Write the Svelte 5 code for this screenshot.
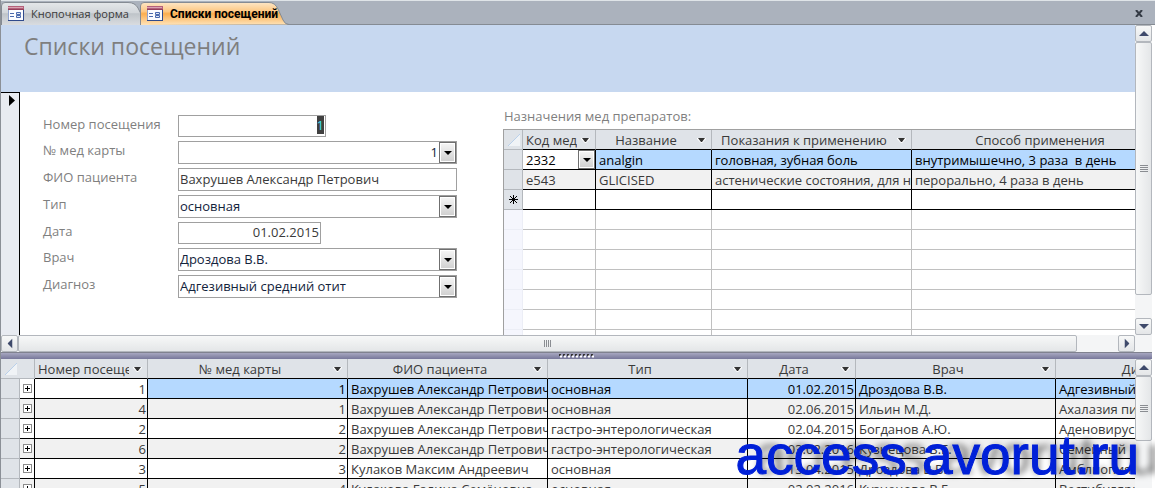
<script>
  const fields = [
    { id: 'visit', label: 'Номер посещения', kind: 'number', value: '1' },
    { id: 'card', label: '№ мед карты', kind: 'combo', value: '1', right: true },
    { id: 'patient', label: 'ФИО пациента', kind: 'text', value: 'Вахрушев Александр Петрович' },
    { id: 'type', label: 'Тип', kind: 'combo', value: 'основная' },
    { id: 'date', label: 'Дата', kind: 'date', value: '01.02.2015' },
    { id: 'doctor', label: 'Врач', kind: 'combo', value: 'Дроздова В.В.' },
    { id: 'diagnosis', label: 'Диагноз', kind: 'combo', value: 'Адгезивный средний отит' }
  ];

  const drugHeads = ['Код мед', 'Название', 'Показания к применению', 'Способ применения'];
  const emptyRows = [1, 2, 3, 4, 5, 6, 7];

  const visitHeads = ['Номер посещения', '№ мед карты', 'ФИО пациента', 'Тип', 'Дата', 'Врач', 'Диагноз'];
  const visits = [
    ['1', '1', 'Вахрушев Александр Петрович', 'основная', '01.02.2015', 'Дроздова В.В.', 'Адгезивный средний отит'],
    ['4', '1', 'Вахрушев Александр Петрович', 'основная', '02.06.2015', 'Ильин М.Д.', 'Ахалазия пищевода'],
    ['2', '2', 'Вахрушев Александр Петрович', 'гастро-энтерологическая', '02.04.2015', 'Богданов А.Ю.', 'Аденовирусная инфекция'],
    ['6', '2', 'Вахрушев Александр Петрович', 'гастро-энтерологическая', '03.02.2016', 'Кузнецова В.Е.', 'Семейный полипоз'],
    ['3', '3', 'Кулаков Максим Андреевич', 'основная', '13.04.2015', 'Дроздова В.В.', 'Амблиопия'],
    ['5', '4', 'Кулакова Галина Семёновна', 'основная', '02.02.2016', 'Кузнецова В.Е.', 'Вестибулярный неврит']
  ];
  const numeric = [0, 1, 4];

  // the key field opens with its value selected
  function selectAll(node) {
    node.focus();
    node.select();
  }
</script>

{#snippet formIcon()}
  <svg class="form-icon" width="16" height="15" viewBox="0 0 16 15">
    <rect x="0" y="0" width="16" height="15" fill="#fbfcff" />
    <path d="M0.5 4v11" stroke="#8fa3cf" />
    <path d="M15.5 4v11M0 14.5h16" stroke="#2f4a8c" />
    <rect x="0" y="0" width="16" height="4" fill="#b4607a" />
    <rect x="0" y="1" width="15" height="1" fill="#d9a3b2" />
    <rect x="0" y="3" width="16" height="1" fill="#963f5b" />
    <path d="M2 7.5h4M2 10.5h4" stroke="#4a69ad" />
    <path d="M8.5 6.5h4v2h-4zM8.5 9.5h4v2h-4z" fill="#dfe7f7" stroke="#4a69ad" />
  </svg>
{/snippet}

{#snippet filterButton(name)}
  <button class="filter" aria-label={name}>
    <svg width="9" height="5" viewBox="0 0 9 5"><path d="M0 0h9v1L5 5H4L0 1z" fill="#fff" /><path d="M1 0h7L5 4H4z" fill="#333" /></svg>
  </button>
{/snippet}

{#snippet corner()}
  <svg class="corner" width="12" height="12" viewBox="0 0 12 12"><path d="M12 0v12H0z" fill="#f0f3f6" /><path d="M0 12L12 0" stroke="#b9d0ea" /></svg>
{/snippet}

{#snippet scrollButton(dir)}
  <button class="scroll-button" aria-label={dir}>
    <svg class={dir} width="10" height="5" viewBox="0 0 10 5"><path d="M5 0l5 5H0z" fill="#3f4a6b" /></svg>
  </button>
{/snippet}

{#snippet comboArrow()}
  <span class="arrow"><svg width="8" height="4" viewBox="0 0 8 4"><path d="M0 0h8L4 4z" /></svg></span>
{/snippet}

<div class="window">
  <nav class="tabs">
    <button class="tab">
      <svg class="tab-shape" width="141" height="23" viewBox="0 0 141 23">
        <defs>
          <linearGradient id="grey" x2="0" y2="1">
            <stop offset="0" stop-color="#e4e7ea" /><stop offset="0.45" stop-color="#d2d6da" />
            <stop offset="0.5" stop-color="#bfc4c9" /><stop offset="1" stop-color="#d9dce0" />
          </linearGradient>
        </defs>
        <path d="M0.5 23V4Q0.5 0.5 4 0.5H127Q134 0.5 137 6L141 14V23" fill="url(#grey)" stroke="#858b93" />
      </svg>
      {@render formIcon()}<span>Кнопочная форма</span>
    </button>
    <button class="tab active">
      <svg class="tab-shape" width="149" height="23" viewBox="0 0 149 23">
        <defs>
          <linearGradient id="orange" x2="0" y2="1">
            <stop offset="0" stop-color="#fde6c6" /><stop offset="0.4" stop-color="#fdc782" />
            <stop offset="0.5" stop-color="#fbae4e" /><stop offset="1" stop-color="#fee3ba" />
          </linearGradient>
        </defs>
        <path d="M0.5 23V4Q0.5 0.5 4 0.5H129Q135 0.5 138 7L143 18Q145 22.5 149 22.5" fill="url(#orange)" stroke="#858b93" />
      </svg>
      {@render formIcon()}<span>Списки посещений</span>
    </button>
    <button class="close" aria-label="Закрыть">
      <svg width="8" height="7" viewBox="0 0 8 7"><path d="M1 0l6 7M7 0l-6 7" stroke="#333a44" stroke-width="2" /></svg>
    </button>
  </nav>

  <div class="upper">
    <div class="form-column">
      <header><h1>Списки посещений</h1></header>
      <div class="detail">
        <button class="record-selector" aria-label="Запись">
          <svg width="6" height="11" viewBox="0 0 6 11"><path d="M0 0l6 5.5L0 11z" fill="#000" /></svg>
        </button>
        <form class="fields">
          {#each fields as f}
            <div class="field {f.kind}">
              <label for={f.id}>{f.label}</label>
              {#if f.kind === 'combo'}
                <div class="combo">
                  <select id={f.id} class:right={f.right}><option>{f.value}</option></select>
                  {@render comboArrow()}
                </div>
              {:else if f.kind === 'number'}
                <input id={f.id} value={f.value} use:selectAll />
              {:else}
                <input id={f.id} value={f.value} />
              {/if}
            </div>
          {/each}
        </form>
        <section class="drugs">
          <h2>Назначения мед препаратов:</h2>
          <table class="sheet drug-sheet">
            <colgroup><col class="c-sel" /><col class="c-code" /><col class="c-name" /><col class="c-use" /><col class="c-way" /></colgroup>
            <thead>
              <tr>
                <th>{@render corner()}</th>
                {#each drugHeads as h}
                  <th><div class="head"><span>{h}</span>{@render filterButton(h)}</div></th>
                {/each}
              </tr>
            </thead>
            <tbody>
              <tr class="current">
                <td class="sel"></td>
                <td class="focus">
                  <div class="combo">
                    <select aria-label="Код мед"><option>2332</option></select>
                    {@render comboArrow()}
                  </div>
                </td>
                <td>analgin</td>
                <td>головная, зубная боль</td>
                <td>внутримышечно, 3 раза&nbsp; в день</td>
              </tr>
              <tr class="alt">
                <td class="sel"></td><td>e543</td><td>GLICISED</td><td>астенические состояния, для н</td><td>перорально, 4 раза в день</td>
              </tr>
              <tr>
                <td class="sel">
                  <svg width="9" height="9" viewBox="0 0 9 9"><path d="M4.5 0v9M0 4.5h9M1 1l7 7M8 1L1 8" stroke="#000" /></svg>
                </td>
                <td></td><td></td><td></td><td></td>
              </tr>
              {#each emptyRows as r}
                <tr class="blank"><td class="sel"></td><td></td><td></td><td></td><td></td></tr>
              {/each}
            </tbody>
          </table>
        </section>
      </div>
      <div class="scroll-x">
        {@render scrollButton('left')}
        <div class="thumb"><svg width="8" height="7" viewBox="0 0 8 7"><path d="M0.5 0v7M2.5 0v7M4.5 0v7M6.5 0v7" stroke="#8a8d92" /></svg></div>
        <div class="track"></div>
        {@render scrollButton('right')}
      </div>
    </div>
    <div class="scroll-y">
      {@render scrollButton('up')}
      <div class="thumb"><svg width="8" height="7" viewBox="0 0 8 7"><path d="M0 0.5h8M0 2.5h8M0 4.5h8M0 6.5h8" stroke="#8a8d92" /></svg></div>
      <div class="track"></div>
      {@render scrollButton('down')}
      <div class="size-box"></div>
    </div>
  </div>

  <div class="splitter">
    <svg width="36" height="4" viewBox="0 0 36 4">
      <path d="M0 1h36" stroke="#333" stroke-width="2" stroke-dasharray="2 2" />
      <path d="M1 2.5h35" stroke="#fff" stroke-width="2" stroke-dasharray="2 2" />
    </svg>
  </div>

  <div class="lower">
    <div class="sheet-view">
      <table class="sheet visit-sheet">
        <colgroup>
          <col class="c-sel" /><col class="c-plus" /><col class="c-visit" /><col class="c-wide" /><col class="c-wide" />
          <col class="c-wide" /><col class="c-date" /><col class="c-wide" /><col class="c-wide" />
        </colgroup>
        <thead>
          <tr>
            <th colspan="2">{@render corner()}</th>
            {#each visitHeads as h}
              <th><div class="head"><span>{h}</span>{@render filterButton(h)}</div></th>
            {/each}
          </tr>
        </thead>
        <tbody>
          {#each visits as row, i}
            <tr class:current={i === 0} class:alt={i % 2 === 1}>
              <td class="sel"></td>
              <td class="plus">
                <button aria-label="Развернуть"><svg width="9" height="9" viewBox="0 0 9 9"><rect x="0.5" y="0.5" width="8" height="8" fill="#fff" stroke="#8c8c8c" /><path d="M2 4.5h5M4.5 2v5" stroke="#000" /></svg></button>
              </td>
              {#each row as cell, c}
                <td class:num={numeric.includes(c)} class:focus={i === 0 && c === 0}>{cell}</td>
              {/each}
            </tr>
          {/each}
        </tbody>
      </table>
    </div>
    <div class="scroll-y">
      {@render scrollButton('up')}
      <div class="thumb"><svg width="8" height="7" viewBox="0 0 8 7"><path d="M0 0.5h8M0 2.5h8M0 4.5h8M0 6.5h8" stroke="#8a8d92" /></svg></div>
      <div class="track"></div>
    </div>
  </div>

  <div class="watermark">access.avorut.ru</div>
</div>

<style>
  :global(body) {
    background: #fff;
  }

  .window {
    position: relative;
    box-sizing: border-box;
    display: flex;
    flex-direction: column;
    height: 100vh;
    overflow: hidden;
    padding-right: 3px;
    border-left: 1px solid #8b9097;
    font: 13px/16px "Open Sans", "Noto Sans", sans-serif;
    color: #3a3a3a;
  }

  button,
  input,
  select {
    box-sizing: border-box;
    margin: 0;
    padding: 0;
    border: 0;
    font: inherit;
    color: inherit;
    background: none;
  }

  svg {
    display: block;
    flex: none;
  }

  /* document tabs */
  .tabs {
    display: flex;
    flex: none;
    box-sizing: border-box;
    height: 25px;
    padding-top: 1px;
    margin-right: -3px;
    background: #abb2bd;
    border-top: 1px solid #dfe4e8;
    border-bottom: 1px solid #858b93;
  }

  .tab {
    position: relative;
    display: flex;
    align-items: center;
    gap: 7px;
    width: 139px;
    height: 23px;
    padding-left: 7px;
    font-size: 11px;
    white-space: nowrap;
  }

  .tab.active {
    width: 149px;
    font-weight: 700;
    font-family: Roboto, "Open Sans", sans-serif;
    font-size: 12px;
    color: #000;
  }

  .tab-shape {
    position: absolute;
    left: 0;
    top: 0;
  }

  .tab > .form-icon,
  .tab > span {
    position: relative;
  }

  .close {
    margin-left: auto;
    padding: 0 12px;
  }

  /* form pane */
  .upper {
    display: flex;
    flex: none;
    height: 327px;
  }

  .form-column {
    display: flex;
    flex-direction: column;
    flex: 1;
    min-width: 0;
  }

  header {
    flex: none;
    height: 67px;
    background: #c7d8f0;
  }

  h1 {
    margin: 0;
    padding: 6px 23px;
    font-size: 23px;
    line-height: 30px;
    font-weight: 400;
    color: #7f7f7f;
  }

  .detail {
    display: flex;
    flex: 1;
    min-height: 0;
    overflow: hidden;
    background: #fff;
  }

  .record-selector {
    display: flex;
    flex: none;
    width: 19px;
    padding: 2px 0 0 8px;
    background: #e8ebf1;
    border-top: 1px solid #000;
    border-right: 1px solid #000;
  }

  .fields {
    display: flex;
    flex-direction: column;
    flex: none;
    gap: 4px;
    width: 437px;
    padding: 23px 23px 0;
  }

  .field {
    display: flex;
    height: 23px;
  }

  .field.number,
  .field.date {
    height: 22px;
  }

  label {
    flex: none;
    width: 135px;
    line-height: 18px;
    color: #7f7f7f;
  }

  .field input,
  .field .combo {
    width: 279px;
    height: 100%;
    border: 1px solid #a0a0a0;
    background: #fff;
  }

  .field input {
    padding: 0 1px 2px;
    line-height: 18px;
    outline: none;
  }

  .field.number input {
    width: 148px;
    text-align: right;
  }

  .field.number input::selection {
    color: #3fe0f0;
    background: #404040;
  }

  .field.date input {
    width: 143px;
    text-align: right;
  }

  .combo {
    display: flex;
    box-sizing: border-box;
    position: relative;
    color: #12233c;
  }

  .combo select {
    flex: 1;
    width: 100%;
    padding: 0 18px 2px 1px;
    appearance: none;
    outline: none;
  }

  .combo select.right {
    text-align: right;
    text-align-last: right;
  }

  .arrow {
    position: absolute;
    top: 0;
    bottom: 0;
    right: 0;
    display: flex;
    align-items: center;
    justify-content: center;
    box-sizing: border-box;
    width: 17px;
    border: 1px solid #6f6f6f;
    background: linear-gradient(#f6f6f6, #cfcfcf);
    box-shadow: inset 0 0 0 1px #fff;
    pointer-events: none;
  }

  /* subform */
  .drugs {
    flex: 1;
    min-width: 0;
    padding-top: 15px;
  }

  h2 {
    margin: 0;
    padding: 1px 0 5px 1px;
    font-size: 13px;
    line-height: 16px;
    font-weight: 400;
    color: #7f7f7f;
  }

  .sheet {
    border-collapse: separate;
    border-spacing: 0;
    table-layout: fixed;
    width: 0;
  }

  .drug-sheet {
    border-top: 1px solid #a0a0a0;
    border-left: 1px solid #a0a0a0;
  }

  .c-sel { width: 19px; }
  .c-code { width: 73px; }
  .c-name { width: 116px; }
  .c-use { width: 200px; }
  .c-way { width: 272px; }
  .c-plus { width: 15px; }
  .c-visit { width: 113px; }
  .c-wide { width: 200px; }
  .c-date { width: 108px; }

  th,
  td {
    box-sizing: border-box;
    height: 20px;
    padding: 0;
    overflow: hidden;
    white-space: nowrap;
    line-height: 18px;
  }

  th {
    font-weight: 400;
    background: #dfe3e8;
    border-right: 1px solid #b4b8bd;
    border-bottom: 1px solid #000;
  }

  th:first-child {
    border-bottom-color: #b4b8bd;
  }

  td {
    padding: 0 1px 0 3px;
    border-right: 1px solid #000;
    border-bottom: 1px solid #000;
  }

  .head {
    display: flex;
    align-items: center;
    padding-left: 3px;
  }

  .head span {
    flex: 1;
    overflow: hidden;
    text-align: center;
  }

  .filter {
    flex: none;
    width: 18px;
    height: 18px;
    padding: 2px 0 0 4px;
  }

  .corner {
    margin-left: 4px;
  }

  .current td {
    color: #000;
    background: #b5d9ff;
  }

  .current td.focus,
  .current td.plus {
    color: inherit;
    background: #fff;
  }

  .alt td {
    background: #f1f1f1;
  }

  .blank td {
    border-color: #c0c0c0;
  }

  .sheet td.sel {
    padding-left: 5px;
    background: #dfe3e8;
    border-right-color: #b4b8bd;
    border-bottom-color: #b4b8bd;
  }

  .sheet .blank td.sel {
    background: #f5f6fd;
    border-color: #eceef6;
  }

  .drug-sheet .focus {
    padding: 0;
  }

  .drug-sheet .combo {
    height: 19px;
    color: #000;
  }

  .drug-sheet .combo select {
    padding-left: 3px;
    padding-bottom: 0;
  }

  .num {
    text-align: right;
  }

  .sheet td.plus {
    padding: 0 0 0 3px;
  }

  .plus button {
    display: block;
  }

  /* scroll bars */
  .scroll-x,
  .scroll-y {
    display: flex;
    flex: none;
    background: #f4f5f6;
  }

  .scroll-x {
    height: 17px;
  }

  .scroll-y {
    flex-direction: column;
    width: 17px;
  }

  .scroll-button,
  .thumb {
    display: flex;
    align-items: center;
    justify-content: center;
    box-sizing: border-box;
    border: 1px solid #b3b7bd;
    border-radius: 2px;
    background: linear-gradient(#f7f8f8, #e4e6e8);
  }

  .scroll-button {
    flex: none;
    width: 17px;
    height: 17px;
  }

  .scroll-button .down { transform: rotate(180deg); }
  .scroll-button .left { transform: rotate(-90deg); }
  .scroll-button .right { transform: rotate(90deg); }

  .scroll-x .thumb {
    flex: 26;
  }

  .scroll-x .track {
    flex: 1;
  }

  .upper .scroll-y .thumb {
    flex: 11;
  }

  .upper .scroll-y .track {
    flex: 1;
  }

  .scroll-y .thumb {
    background: linear-gradient(to right, #f7f8f8, #e4e6e8);
  }

  .size-box {
    height: 17px;
  }

  .splitter {
    display: flex;
    flex: none;
    align-items: center;
    justify-content: center;
    box-sizing: border-box;
    height: 7px;
    border-top: 1px solid #80828f;
    background: linear-gradient(#a7a7c0, #77779a);
  }

  /* datasheet pane */
  .lower {
    display: flex;
    flex: 1;
    min-height: 0;
  }

  .sheet-view {
    flex: 1;
    min-width: 0;
    overflow: hidden;
  }

  .lower .thumb {
    flex: none;
    height: 65px;
  }

  .watermark {
    position: absolute;
    right: 16px;
    bottom: 2px;
    font: 55px/62px "Liberation Sans", Arial, sans-serif;
    color: #0020d8;
    -webkit-text-stroke: 1px #0020d8;
    text-shadow: 20px 0 6px rgba(0, 0, 0, 0.5);
    pointer-events: none;
  }
</style>
